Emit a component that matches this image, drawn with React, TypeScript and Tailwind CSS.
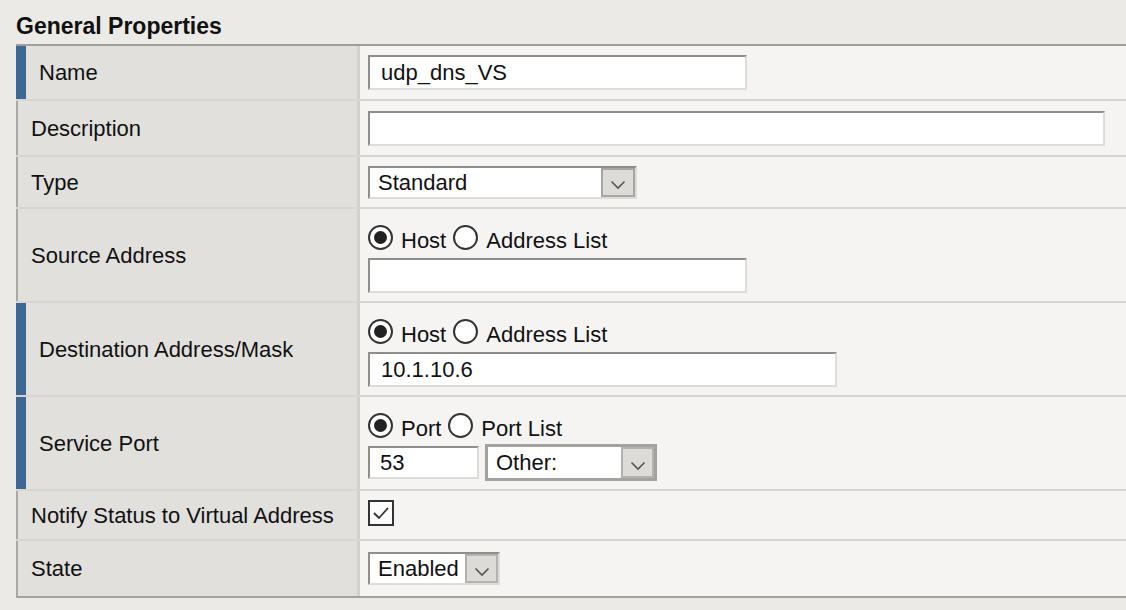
import React from "react";

const FONT = { fontFamily: '"Liberation Sans", Arial, sans-serif' };

function Chevron() {
  return (
    <svg width="16" height="10" viewBox="0 0 16 10" className="mt-[6px]">
      <polyline points="1.5,1.5 8,8 14.5,1.5" fill="none" stroke="#555" strokeWidth="1.6" />
    </svg>
  );
}

function TextBox({ w, value }: { w: string; value?: string }) {
  return (
    <div
      className={`${w} h-[35px] bg-white border-2 border-t-[#8f8e8b] border-l-[#8f8e8b] border-b-[#dddcd9] border-r-[#dddcd9] flex items-center pl-[11px] text-[22px] text-[#111]`}
    >
      {value}
    </div>
  );
}

function Radio({ checked }: { checked?: boolean }) {
  return (
    <div className="w-[25px] h-[25px] rounded-full border-2 border-[#333] bg-white flex items-center justify-center shrink-0">
      {checked ? <div className="w-[13px] h-[13px] rounded-full bg-[#222]" /> : null}
    </div>
  );
}

function RadioLine({ a, b }: { a: string; b: string }) {
  return (
    <div className="flex items-center h-[28px] text-[22px] text-[#111]">
      <Radio checked />
      <span className="ml-[8px] mt-[6px]">{a}</span>
      <div className="ml-[7px]">
        <Radio />
      </div>
      <span className="ml-[8px] mt-[6px]">{b}</span>
    </div>
  );
}

function Label({ text, req }: { text: string; req?: boolean }) {
  return (
    <div
      className={`w-[344px] shrink-0 flex items-center bg-[#e1e0dd] border-r-[3px] border-r-[#d2d1ce] pl-[13px] text-[22px] text-[#111] ${
        req ? "border-l-[10px] border-l-[#3d6896]" : "border-l-2 border-l-[#a9a8a5]"
      }`}
    >
      {text}
    </div>
  );
}

function Row({
  h,
  label,
  req,
  last,
  tall,
  children,
}: {
  h: string;
  label: string;
  req?: boolean;
  last?: boolean;
  tall?: boolean;
  children: React.ReactNode;
}) {
  return (
    <div className={`flex ${h} ${last ? "" : "border-b-2 border-b-[#d6d5d2]"}`}>
      <Label text={label} req={req} />
      <div className={`flex-1 flex flex-col justify-center bg-[#f5f4f2] pl-[8px] ${tall ? "pt-[6px]" : ""}`}>
        {children}
      </div>
    </div>
  );
}

export default function App() {
  return (
    <div style={FONT} className="w-[1126px] h-[610px] bg-[#ebeae7] overflow-hidden pl-[16px]">
      <div className="h-[44px] flex items-end pb-[1px] text-[23px] font-bold text-[#111]">General Properties</div>
      <div className="border-t-2 border-t-[#9f9e9b] border-b-2 border-b-[#a3a29f]">
        <Row h="h-[55px]" label="Name" req>
          <TextBox w="w-[379px]" value="udp_dns_VS" />
        </Row>
        <Row h="h-[56px]" label="Description">
          <TextBox w="w-[737px]" />
        </Row>
        <Row h="h-[52px]" label="Type">
          <div className="w-[269px] h-[33px] bg-white border-2 border-t-[#8f8e8b] border-l-[#8f8e8b] border-b-[#dddcd9] border-r-[#dddcd9] flex text-[22px] text-[#111]">
            <span className="flex-1 flex items-center pl-[8px]">Standard</span>
            <div className="w-[34px] bg-[#dcdbd8] border-2 border-[#a7a6a3] flex items-center justify-center">
              <Chevron />
            </div>
          </div>
        </Row>
        <Row h="h-[94px]" label="Source Address" tall>
          <RadioLine a="Host" b="Address List" />
          <div className="mt-[6px]">
            <TextBox w="w-[379px]" />
          </div>
        </Row>
        <Row h="h-[94px]" label="Destination Address/Mask" req tall>
          <RadioLine a="Host" b="Address List" />
          <div className="mt-[6px]">
            <TextBox w="w-[469px]" value="10.1.10.6" />
          </div>
        </Row>
        <Row h="h-[94px]" label="Service Port" req tall>
          <RadioLine a="Port" b="Port List" />
          <div className="mt-[5px] flex items-center">
            <div className="w-[111px] h-[33px] bg-white border-2 border-t-[#8f8e8b] border-l-[#8f8e8b] border-b-[#dddcd9] border-r-[#dddcd9] flex items-center pl-[10px] text-[22px] text-[#111]">
              53
            </div>
            <div className="ml-[6px] w-[172px] h-[37px] border-[3px] border-[#a3a29f] bg-white flex text-[22px] text-[#111]">
              <span className="flex-1 flex items-center pl-[8px]">Other:</span>
              <div className="w-[33px] bg-[#dcdbd8] border-2 border-[#b3b2af] flex items-center justify-center">
                <Chevron />
              </div>
            </div>
          </div>
        </Row>
        <Row h="h-[50px]" label="Notify Status to Virtual Address">
          <div className="w-[26px] h-[26px] border-2 border-[#333] bg-white flex items-center justify-center -mt-[4px]">
            <svg width="18" height="14" viewBox="0 0 18 14">
              <polyline points="2,7 7,12 16,2" fill="none" stroke="#333" strokeWidth="1.8" />
            </svg>
          </div>
        </Row>
        <Row h="h-[55px]" label="State" last>
          <div className="w-[132px] h-[33px] bg-white border-2 border-t-[#8f8e8b] border-l-[#8f8e8b] border-b-[#dddcd9] border-r-[#dddcd9] flex text-[22px] text-[#111]">
            <span className="flex-1 flex items-center pl-[8px]">Enabled</span>
            <div className="w-[33px] bg-[#dcdbd8] border-2 border-[#b3b2af] flex items-center justify-center">
              <Chevron />
            </div>
          </div>
        </Row>
      </div>
    </div>
  );
}
